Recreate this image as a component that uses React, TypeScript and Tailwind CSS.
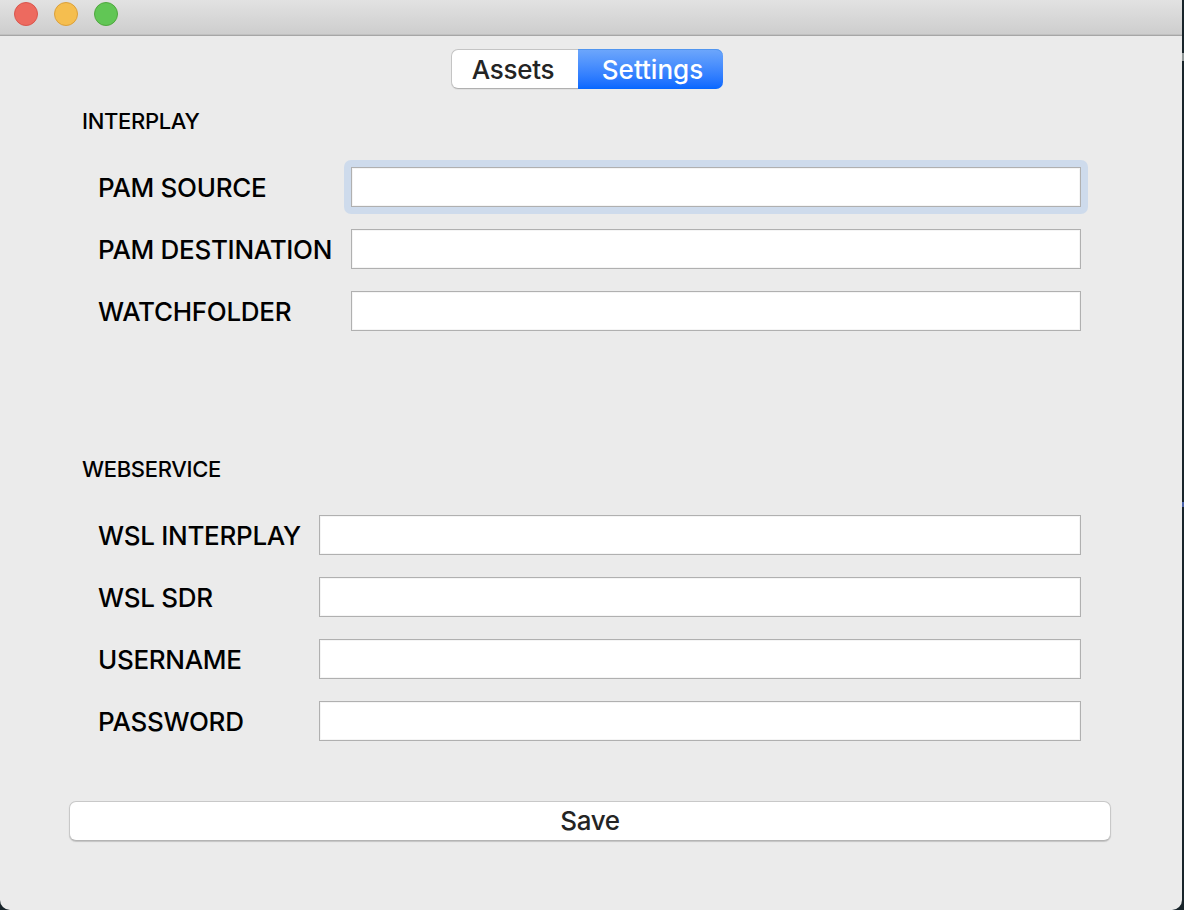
import React from "react";

function Field({ label, focused = false, labelWidth }: { label: string; focused?: boolean; labelWidth: string }) {
  return (
    <label className="flex h-10 items-center">
      <span className={`${labelWidth} shrink-0 whitespace-nowrap pt-0.5 text-[26px] font-[450] leading-10 tracking-[-0.3px]`}>{label}</span>
      <span className={`-m-[7px] flex min-w-0 flex-1 rounded-[7px] p-[7px] ${focused ? "bg-[#cedbec]" : ""}`}>
        <input
          type="text"
          defaultValue=""
          className="h-10 min-w-0 flex-1 border border-[#b0b0b0] bg-white px-2 text-[26px] shadow-[inset_0_0_0_1px_#f5f5f5] outline-none"
        />
      </span>
    </label>
  );
}

export default function App() {
  return (
    <div className="flex h-[910px] w-[1184px] overflow-hidden bg-[#18242a] font-['Inter',sans-serif] text-black">
      <div className="flex w-[1182px] flex-col overflow-hidden rounded-b-[10px] bg-[#ebebeb]">
        <header className="flex h-9 shrink-0 gap-4 border-b border-[#a6a6a6] bg-gradient-to-b from-[#e2e2e2] to-[#cdcdcd] pl-3.5 pt-0.5 shadow-[inset_0_-1px_0_#c0c0c0]">
          <span className="size-6 rounded-full border border-[#d9564d] bg-[#ed6a5f]" />
          <span className="size-6 rounded-full border border-[#dba03b] bg-[#f5be4f]" />
          <span className="size-6 rounded-full border border-[#50a73f] bg-[#61c655]" />
        </header>
        <nav className="ml-[451px] mt-[13px] flex h-10 w-[272px] shrink-0 rounded-[7px] text-[26px] leading-10">
          <button className="w-[127px] rounded-l-[7px] border border-r-0 border-[#c4c4c4] border-b-[#b0b0b0] bg-white pr-1 pt-px font-[450] leading-[38px] tracking-[-0.3px] text-[#242424] shadow-[0_1px_0_#e0e0e0]">Assets</button>
          <button className="flex-1 rounded-r-[7px] bg-gradient-to-b from-[#6ea7fb] to-[#0467ff] pl-1 pt-px font-medium text-white shadow-[inset_0_1px_0_#5195ef]">Settings</button>
        </nav>
        <section className="ml-[82px] mr-[101px] mt-5 h-[348px] shrink-0">
          <h2 className="h-6 text-[22px] font-[450] leading-6 tracking-[-0.32px]">INTERPLAY</h2>
          <div className="mt-[34px] flex flex-col gap-[22px] pl-4">
            <Field label="PAM SOURCE" focused labelWidth="w-[253px]" />
            <Field label="PAM DESTINATION" labelWidth="w-[253px]" />
            <Field label="WATCHFOLDER" labelWidth="w-[253px]" />
          </div>
        </section>
        <section className="ml-[82px] mr-[101px] h-[344px] shrink-0">
          <h2 className="h-6 text-[22px] font-[450] leading-6 tracking-[-0.32px]">WEBSERVICE</h2>
          <div className="mt-[34px] flex flex-col gap-[22px] pl-4">
            <Field label="WSL INTERPLAY" labelWidth="w-[221px]" />
            <Field label="WSL SDR" labelWidth="w-[221px]" />
            <Field label="USERNAME" labelWidth="w-[221px]" />
            <Field label="PASSWORD" labelWidth="w-[221px]" />
          </div>
        </section>
        <button className="ml-[69px] h-10 w-[1042px] shrink-0 rounded-[7px] border border-[#c8c8c8] border-b-[#b4b4b4] bg-white text-[26px] font-[450] leading-[38px] tracking-[-0.3px] text-[#242424] shadow-[0_1px_1px_#c4c4c4]">Save</button>
      </div>
      <div className="flex w-0.5 flex-col">
        <span className="mt-[53px] h-2 bg-[#929999]" />
        <span className="mt-[441px] h-[5px] bg-[#4a63aa]" />
      </div>
    </div>
  );
}
